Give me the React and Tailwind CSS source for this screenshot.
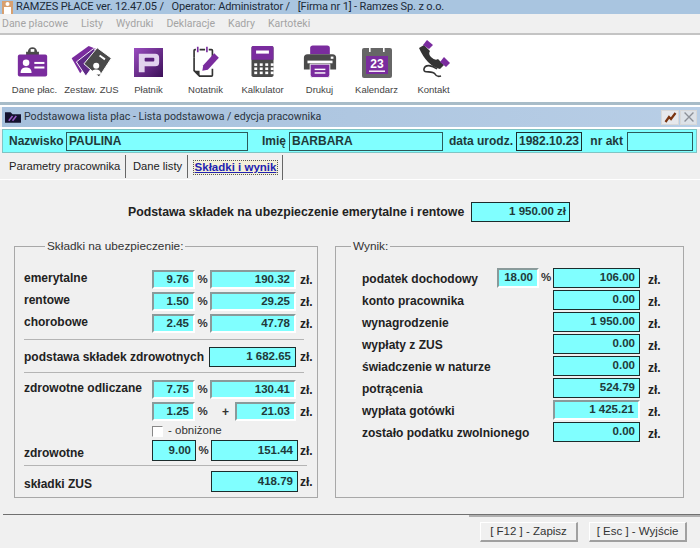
import React from 'react';

const purple = '#7a2c9e';
const dark = '#4a4a4a';

function IconCard() {
  return (
    <svg width="33" height="34" viewBox="0 0 36 36" className="mr-[4px]">
      <path d="M13 8 a5 5 0 0 1 10 0 h2 v4 H11 V8 z" fill={dark} />
      <rect x="16" y="5" width="4" height="3" fill="#fff" />
      <rect x="2" y="11" width="32" height="24" rx="2" fill={purple} />
      <circle cx="11" cy="20" r="3.6" fill="#fff" />
      <path d="M5 31 c0-5 3-6 6-6 s6 1 6 6 z" fill="#fff" />
      <rect x="20" y="19" width="11" height="2.2" fill="#fff" />
      <rect x="20" y="24" width="11" height="2.2" fill="#fff" />
    </svg>
  );
}

function IconZus() {
  return (
    <svg width="43" height="34" viewBox="0 0 44 36">
      <path d="M1 15 L19 2 L29 6 L10 31 z" fill={purple} />
      <path d="M6 19 L24 5 L34 9 L16 34 z" fill="#5f2a86" stroke="#fff" strokeWidth="1" />
      <path d="M14 21 L28 4 L43 15 L30 35 z" fill={dark} stroke="#fff" strokeWidth="1" />
      <circle cx="27" cy="23" r="3.2" fill="#fff" />
      <path d="M21 33 c1-5 3-6 6-6 s5 2 5 5 z" fill="#fff" />
      <rect x="30" y="13" width="7" height="2" fill="#fff" transform="rotate(35 33 14)" />
    </svg>
  );
}

function IconPlatnik() {
  return (
    <svg width="29" height="29" viewBox="0 0 30 30" className="mb-[1px]">
      <defs>
        <linearGradient id="platnik" x1="0" y1="0" x2="1" y2="1">
          <stop offset="0" stopColor="#9a4cc0" />
          <stop offset="1" stopColor="#3c1058" />
        </linearGradient>
      </defs>
      <rect x="0" y="0" width="30" height="30" fill="url(#platnik)" />
      <path d="M5 6 H22 Q26 6 26 10 V15 Q26 19 22 19 H11 V25 H5 z" fill="#e2d2ee" />
      <rect x="11" y="10" width="10" height="4" rx="1" fill="#5a1f7c" />
    </svg>
  );
}

function IconNote() {
  return (
    <svg width="34" height="33" viewBox="0 0 34 36" fill="none">
      <path d="M20 5 H23 Q24 5 24 6 V14 M4 14 V6 Q4 5 5 5 H6 M10 5 H16" stroke="#333" strokeWidth="1.8" />
      <path d="M8 2 V8 M18 2 V8" stroke={purple} strokeWidth="1.8" />
      <path d="M4 14 V26 M24 26 V33 Q24 34 23 34 H10 L4 28 V26" stroke="#333" strokeWidth="1.8" />
      <path d="M4 28 H10 V34 z" fill="#333" />
      <path d="M14 22 L26 9 L31 14 L19 27 L13 28 z" fill={purple} />
    </svg>
  );
}

function IconCalc() {
  const keys = [8, 14, 20, 26];
  return (
    <svg width="25" height="33" viewBox="0 0 26 36">
      <rect x="1" y="1" width="24" height="34" rx="2" fill={dark} />
      <path d="M1 3 Q1 1 3 1 H23 Q25 1 25 3 V16 H1 z" fill={purple} />
      <rect x="6" y="6" width="14" height="3.4" fill="#fff" />
      {[20, 24.5, 29].map((y) =>
        keys.map((k) => <rect key={k + '-' + y} x={k - 4} y={y} width="3.2" height="2.8" fill="#fff" />)
      )}
    </svg>
  );
}

function IconPrint() {
  return (
    <svg width="34" height="33" viewBox="0 0 38 36">
      <path d="M8 3 Q8 0 11 0 H27 Q30 0 30 3 V10 H8 z" fill={purple} />
      <path d="M1 14 Q1 10 5 10 H33 Q37 10 37 14 V27 H1 z" fill={dark} />
      <rect x="5" y="17" width="28" height="3" fill="#fff" />
      <rect x="31" y="12.5" width="3" height="2.5" fill="#fff" />
      <path d="M8 21 H30 V33 Q30 36 27 36 H11 Q8 36 8 33 z" fill={purple} stroke="#fff" strokeWidth="1" />
      <rect x="13" y="26" width="12" height="1.6" fill="#fff" />
      <rect x="13" y="30" width="12" height="1.6" fill="#fff" />
    </svg>
  );
}

function IconCalendar() {
  return (
    <svg width="30" height="32" viewBox="0 0 30 32">
      <rect x="0" y="2" width="30" height="30" rx="2" fill="#666" />
      <rect x="7" y="0" width="1.6" height="6" fill="#fff" />
      <rect x="21" y="0" width="1.6" height="6" fill="#fff" />
      <rect x="4" y="10" width="22" height="18" fill={purple} />
      <text x="15" y="22" fontSize="12" fontWeight="700" textAnchor="middle" fill="#fff" fontFamily="Liberation Sans, sans-serif">23</text>
      <rect x="7" y="24.5" width="16" height="1.4" fill="#fff" />
    </svg>
  );
}

function IconPhone() {
  return (
    <svg width="34" height="38" viewBox="0 0 34 38" fill="none">
      <path d="M2 8 L7 5 L13 11 Q11 14 14 17 Q18 21 21 19 L27 25 L23 29 Q10 26 2 8 z" fill="#333" />
      <path d="M6 5 L10 0 L16 5 L12 9 z" fill={purple} />
      <path d="M23 22 L27 17 L33 23 L29 27 z" fill={purple} />
      <path d="M20 29 C15 25 8 24 7 29 C6 34 15 30 18 34 C19 36 21 37 24 36" stroke="#333" strokeWidth="1.6" />
    </svg>
  );
}

const tools = [
  ['Dane płac.', <IconCard />],
  ['Zestaw. ZUS', <IconZus />],
  ['Płatnik', <IconPlatnik />],
  ['Notatnik', <IconNote />],
  ['Kalkulator', <IconCalc />],
  ['Drukuj', <IconPrint />],
  ['Kalendarz', <IconCalendar />],
  ['Kontakt', <IconPhone />],
];

// sunken = windows style edit, otherwise black frame
function Field({ value, w, sunken, className = '' }) {
  const frame = sunken
    ? 'border-2 border-t-[#8a9a9a] border-l-[#8a9a9a] border-r-white border-b-white'
    : 'border border-[#1c2c2c]';
  return (
    <div className={`h-full ${w} ${frame} bg-[#80ffff] flex items-center justify-end pr-1 text-[11.5px] font-bold text-[#1f3a3a] ${className}`}>
      {value}
    </div>
  );
}

function Zl({ className = 'ml-[4px]' }) {
  return <span className={`text-[12px] font-bold text-[#222] ${className}`}>zł.</span>;
}

function Pct({ w = 'w-[15px]' }) {
  return <span className={`${w} text-center text-[11.5px] font-bold text-[#333]`}>%</span>;
}

function Group({ title, className, legend, children }) {
  return (
    <div className={`relative h-[252px] border border-[#a8a8a8] ${className}`}>
      <span className={`absolute top-[-8px] bg-[#f0f0f0] px-[2px] text-[11.8px] leading-[14px] text-[#333] ${legend}`}>{title}</span>
      {children}
    </div>
  );
}

function Rule({ className }) {
  return <div className={`h-[1px] bg-[#b4b4b4] ml-[9px] w-[280px] ${className}`} />;
}

function LeftRow({ label, pct, value, top = '' }) {
  return (
    <div className={`flex items-center h-[19px] ${top}`}>
      <span className="w-[137px] pl-[9px] text-[12px] font-bold text-[#222] -translate-y-[2px]">{label}</span>
      <Field value={pct} w="w-[43px]" sunken />
      <Pct />
      <Field value={value} w="w-[86px]" sunken />
      <Zl />
    </div>
  );
}

function ResultRow({ label, pct, value, sunken }) {
  return (
    <div className="flex items-center h-[20px] mb-[2px]">
      <span className="w-[135px] whitespace-nowrap text-[12px] font-bold text-[#222] translate-y-[1px]">{label}</span>
      {pct ? <Field value={pct} w="w-[42px]" sunken /> : <div className="w-[42px]" />}
      {pct ? <Pct w="w-[14px]" /> : <div className="w-[14px]" />}
      <Field value={value} w="w-[87px]" sunken={sunken} />
      <Zl className="ml-[8px] translate-y-[2px]" />
    </div>
  );
}

export default function App() {
  return (
    <div className="w-[700px] h-[548px] overflow-hidden bg-[#f0f0f0] flex flex-col font-['Liberation_Sans',sans-serif]">
      <div className="h-[14px] bg-[#a9c5e0] flex items-center pl-[2px] gap-[3px] shrink-0">
        <svg width="11" height="13" viewBox="0 0 11 13">
          <rect x="0" y="0" width="11" height="13" fill="#d8a070" />
          <circle cx="5.5" cy="3" r="2" fill="#fff" />
          <rect x="2" y="6" width="7" height="7" fill="#fff" />
        </svg>
        <span className="text-[11px] leading-[14px] tracking-[-0.14px] text-[#1c2a38] whitespace-pre font-['Roboto',sans-serif]">
          RAMZES PŁACE ver. 12.47.05 /   Operator: Administrator /   [Firma nr 1] - Ramzes Sp. z o.o.
        </span>
      </div>

      <div className="h-[19px] flex items-center gap-[13px] pl-[2px] text-[10.5px] text-[#a4a4a4] font-['Roboto',sans-serif] shrink-0">
        <span>Dane płacowe</span>
        <span>Listy</span>
        <span>Wydruki</span>
        <span>Deklaracje</span>
        <span>Kadry</span>
        <span>Kartoteki</span>
      </div>

      <div className="h-[69px] border-t-2 border-[#c4c4c4] bg-white flex pl-[6px] shrink-0">
        {tools.map(([label, icon]) => (
          <div key={label} className="w-[57px] flex flex-col items-center">
            <div className="h-[48px] flex items-end justify-center pb-[5px]">{icon}</div>
            <span className="text-[9.5px] leading-[14px] text-[#444] whitespace-nowrap">{label}</span>
          </div>
        ))}
      </div>

      <div className="h-[3px] bg-[#a8bcc8] shrink-0" />
      <div className="h-[2px] bg-white shrink-0" />

      <div className="h-[20px] ml-[2px] bg-gradient-to-r from-[#a6c0dc] to-[#b8cee6] flex items-center pl-[3px] gap-[3px] shrink-0">
        <svg width="16" height="12" viewBox="0 0 17 12">
          <path d="M0 1 H6 L8 3 H17 V12 H0 z" fill="#14122e" />
          <path d="M4 10 L8 5 M8 10 L12 5" stroke="#9a5cc8" strokeWidth="1.6" />
        </svg>
        <span className="text-[10.6px] leading-[14px] text-[#2a3440] font-['Roboto',sans-serif]">
          Podstawowa lista płac - Lista podstawowa / edycja pracownika
        </span>
        <div className="ml-auto flex gap-[1px] pr-[3px]">
          <div className="w-[18px] h-[15px] border border-[#d8d8d8] bg-[#e6e8ec] flex items-center justify-center">
            <svg width="13" height="11" viewBox="0 0 13 11" fill="none">
              <path d="M1.5 10 L5 5 L7 7 L11.5 1" stroke="#7a3410" strokeWidth="2.2" />
            </svg>
          </div>
          <div className="w-[17px] h-[15px] border border-[#d8d8d8] bg-[#dde2e8] flex items-center justify-center">
            <svg width="10" height="10" viewBox="0 0 9 9" fill="none">
              <path d="M0.5 0.5 L8.5 8.5 M8.5 0.5 L0.5 8.5" stroke="#8c9098" strokeWidth="1.2" />
            </svg>
          </div>
        </div>
      </div>

      <div className="h-[2px] bg-white shrink-0" />

      <div className="h-[24px] w-[695px] ml-[2px] border border-[#7fc4c4] bg-[#80ffff] flex items-center text-[12px] font-bold text-[#1f3a3a] pl-[6px] shrink-0">
        <span className="w-[57px]">Nazwisko</span>
        <div className="h-[19px] w-[182px] border border-[#2c5a5a] flex items-center pl-[2px]">PAULINA</div>
        <span className="w-[41px] text-right pr-[3px]">Imię</span>
        <div className="h-[19px] w-[154px] border border-[#2c5a5a] flex items-center pl-[2px]">BARBARA</div>
        <span className="w-[73px] text-right pr-[3px] whitespace-nowrap">data urodz.</span>
        <div className="h-[19px] w-[66px] border border-[#1c2c2c] flex items-center justify-center">1982.10.23</div>
        <span className="w-[45px] text-right pr-[4px] whitespace-nowrap">nr akt</span>
        <div className="h-[19px] w-[66px] border border-[#2c5a5a]" />
      </div>

      <div className="h-[27px] border-b border-white flex items-stretch pl-[9px] pt-[2px] text-[11.2px] text-[#222] shrink-0">
        <span className="w-[117px] flex items-center whitespace-nowrap border-r border-[#666] mb-[1px]">Parametry pracownika</span>
        <span className="w-[62px] flex items-center whitespace-nowrap pl-[7px] border-r border-[#666] mb-[1px]">Dane listy</span>
        <div className="ml-[4px] w-[91px] -mb-[1px] flex items-center border-r border-[#666] pl-[1px] bg-[#f0f0f0]">
          <span className="h-[15px] w-[85px] border border-dotted border-[#555] bg-[#f4f0d8] flex items-center justify-center text-[11.5px] font-bold text-[#2222b0] underline whitespace-nowrap">
            Składki i wynik
          </span>
        </div>
      </div>

      <div className="h-[22px] shrink-0" />

      <div className="h-[20px] flex items-center pl-[128px] shrink-0">
        <span className="w-[343px] text-[12.3px] font-bold text-[#222] whitespace-nowrap">
          Podstawa składek na ubezpieczenie emerytalne i rentowe
        </span>
        <div className="h-full w-[99px] border border-[#1c2c2c] bg-[#80ffff] flex items-center justify-end pr-[3px] text-[11.5px] font-bold text-[#1f3a3a]">
          1 950.00 zł
        </div>
      </div>

      <div className="h-[24px] shrink-0" />

      <div className="flex pl-[14px] shrink-0">
        <Group title="Składki na ubezpieczenie:" className="w-[304px] pt-[23px]" legend="left-[30px]">
          <LeftRow label="emerytalne" pct="9.76" value="190.32" />
          <LeftRow label="rentowe" pct="1.50" value="29.25" top="mt-[3px]" />
          <LeftRow label="chorobowe" pct="2.45" value="47.78" top="mt-[3px]" />
          <Rule className="mt-[6px]" />
          <div className="flex items-center h-[20px] mt-[7px]">
            <span className="w-[194px] pl-[9px] text-[12px] font-bold text-[#222] whitespace-nowrap">podstawa składek zdrowotnych</span>
            <Field value="1 682.65" w="w-[87px]" />
            <Zl />
          </div>
          <Rule className="mt-[5px]" />
          <LeftRow label="zdrowotne odliczane" pct="7.75" value="130.41" top="mt-[7px]" />
          <div className="flex items-center h-[19px] mt-[3px]">
            <div className="w-[137px]" />
            <Field value="1.25" w="w-[43px]" sunken />
            <Pct />
            <span className="w-[25px] pl-[6px] text-center text-[12px] font-bold text-[#333]">+</span>
            <Field value="21.03" w="w-[61px]" sunken />
            <Zl />
          </div>
          <div className="flex items-center h-[12px] mt-[4px] pl-[137px]">
            <div className="w-[11px] h-[11px] border border-t-[#888] border-l-[#888] border-r-white border-b-white bg-white" />
            <span className="ml-[5px] text-[11.5px] text-[#333]">- obniżone</span>
          </div>
          <div className="flex items-center h-[21px] mt-[3px]">
            <span className="w-[137px] pl-[9px] text-[12px] font-bold text-[#222] translate-y-[2px]">zdrowotne</span>
            <Field value="9.00" w="w-[44px]" />
            <Pct />
            <Field value="151.44" w="w-[87px]" />
            <Zl className="ml-[2px]" />
          </div>
          <Rule className="mt-[4px] w-[283px]" />
          <div className="flex items-center h-[21px] mt-[5px]">
            <span className="w-[196px] pl-[9px] text-[12px] font-bold text-[#222] translate-y-[2px]">składki ZUS</span>
            <Field value="418.79" w="w-[87px]" />
            <Zl className="ml-[2px]" />
          </div>
        </Group>

        <Group title="Wynik:" className="w-[349px] ml-[17px] pt-[21px] pl-[26px]" legend="left-[15px]">
          <ResultRow label="podatek dochodowy" pct="18.00" value="106.00" />
          <ResultRow label="konto pracownika" value="0.00" />
          <ResultRow label="wynagrodzenie" value="1 950.00" />
          <ResultRow label="wypłaty z ZUS" value="0.00" />
          <ResultRow label="świadczenie w naturze" value="0.00" />
          <ResultRow label="potrącenia" value="524.79" />
          <ResultRow label="wypłata gotówki" value="1 425.21" sunken />
          <ResultRow label="zostało podatku zwolnionego" value="0.00" />
        </Group>
      </div>

      <div className="h-[16px] shrink-0" />

      <div className="h-[1px] ml-[3px] bg-[#707070] shrink-0" />
      <div className="h-[2px] ml-[469px] bg-[#b0b0b0] shrink-0" />

      <div className="flex pl-[480px] pt-[5px] gap-[11px] text-[11.5px] text-[#333] shrink-0">
        <div className="w-[98px] h-[20px] border-r-2 border-b-2 border-[#a0a0a0] border-t border-l border-t-white border-l-white flex items-center justify-center">
          [ F12 ] - Zapisz
        </div>
        <div className="w-[98px] h-[20px] border-r-2 border-b-2 border-[#a0a0a0] border-t border-l border-t-white border-l-white flex items-center justify-center">
          [ Esc ] - Wyjście
        </div>
      </div>
    </div>
  );
}
